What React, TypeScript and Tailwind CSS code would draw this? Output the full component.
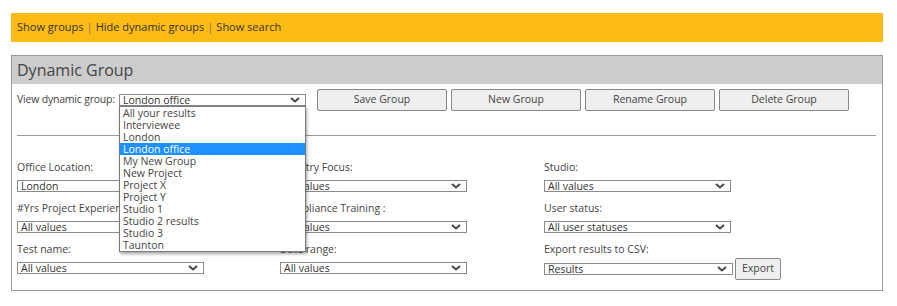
import React from "react";

const groups = [
  "All your results",
  "Interviewee",
  "London",
  "London office",
  "My New Group",
  "New Project",
  "Project X",
  "Project Y",
  "Studio 1",
  "Studio 2 results",
  "Studio 3",
  "Taunton",
];

function Chevron() {
  return (
    <svg width="10" height="6" viewBox="0 0 10 6" className="shrink-0">
      <polyline points="1,1 5,4.5 9,1" fill="none" stroke="#444" strokeWidth="1.9" />
    </svg>
  );
}

function Select({ value, width = "w-[187px]" }: { value: string; width?: string }) {
  return (
    <div className={`${width} flex h-[12px] items-center justify-between border border-[#8a8a8a] bg-white pl-[3px] pr-[5px] text-[10.5px] leading-[10px] text-[#333]`}>
      <span className="whitespace-nowrap">{value}</span>
      <Chevron />
    </div>
  );
}

function Button({ label }: { label: string }) {
  return (
    <button className="h-[22px] w-[130px] rounded-[2px] border border-[#888] bg-[#efefef] text-[10.5px] text-[#444]">
      {label}
    </button>
  );
}

function Field({ label, value }: { label: string; value: string }) {
  return (
    <div className="flex flex-col">
      <div className="h-[15px] whitespace-nowrap leading-[15px] text-[#444]">{label}</div>
      <div className="mt-[5px]">
        <Select value={value} />
      </div>
    </div>
  );
}

export default function App() {
  return (
    <div className="min-h-[306px] bg-white px-[11px] pt-[13px] font-['Open_Sans',sans-serif] text-[10.5px]">
      <div className="flex h-[29px] w-[872px] items-center bg-[#fdbb14] px-[6px] text-[11px] text-[#333]">
        <span>Show groups</span>
        <span className="mx-[3px] text-[#777]">|</span>
        <span>Hide dynamic groups</span>
        <span className="mx-[3px] text-[#777]">|</span>
        <span>Show search</span>
      </div>

      <div className="mt-[13px] w-[872px] border border-[#9a9a9a]">
        <div className="flex h-[28px] items-center bg-[#cccccc] px-[5px] text-[16px] text-[#444]">
          Dynamic Group
        </div>

        <div className="pb-[10px] pl-[5px] pr-[6px] pt-[5px]">
          <div className="flex items-center">
            <span className="w-[102px] shrink-0 whitespace-nowrap tracking-[-0.2px] text-[#444]">View dynamic group:</span>
            <div className="relative">
              <Select value="London office" />
              <div className="absolute left-0 top-[12px] z-10 w-[187px] border border-[#7a7a7a] bg-white shadow-[1px_2px_3px_rgba(0,0,0,0.35)]">
                {groups.map((g) => (
                  <div
                    key={g}
                    className={
                      g === "London office"
                        ? "h-[12px] whitespace-nowrap bg-[#1e90ff] px-[3px] leading-[12px] text-white"
                        : "h-[12px] whitespace-nowrap px-[3px] leading-[12px] text-[#444]"
                    }
                  >
                    {g}
                  </div>
                ))}
              </div>
            </div>
            <div className="ml-[11px] flex gap-[4px]">
              <Button label="Save Group" />
              <Button label="New Group" />
              <Button label="Rename Group" />
              <Button label="Delete Group" />
            </div>
          </div>

          <div className="mt-[24px] h-px bg-[#999]" />

          <div className="mt-[24px] grid grid-cols-[263px_264px_1fr] gap-y-[9px]">
            <Field label="Office Location:" value="London" />
            <Field label="Country Focus:" value="All values" />
            <Field label="Studio:" value="All values" />
            <Field label="#Yrs Project Experience:" value="All values" />
            <Field label="Compliance Training :" value="All values" />
            <Field label="User status:" value="All user statuses" />
            <Field label="Test name:" value="All values" />
            <Field label="Date range:" value="All values" />
            <div className="flex flex-col">
              <div className="h-[15px] whitespace-nowrap leading-[15px] text-[#444]">Export results to CSV:</div>
              <div className="mt-px flex items-center gap-[2px]">
                <Select value="Results" width="w-[189px]" />
                <button className="h-[22px] w-[46px] rounded-[2px] border border-[#888] bg-[#efefef] text-[10.5px] text-[#444]">
                  Export
                </button>
              </div>
            </div>
          </div>
        </div>
      </div>
    </div>
  );
}
